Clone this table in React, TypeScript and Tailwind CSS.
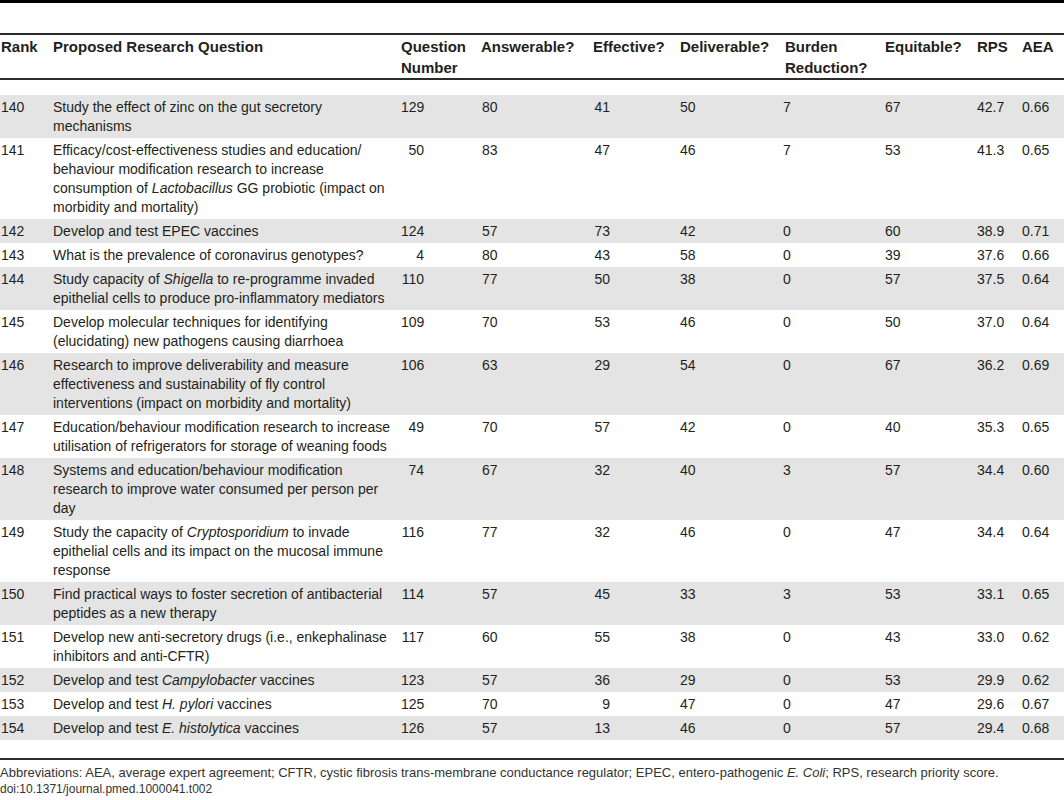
const rows: [string, string[], string, string, string, string, string, string, string, string][] = [
  ["140", ["Study the effect of zinc on the gut secretory", "mechanisms"], "129", "80", "41", "50", "7", "67", "42.7", "0.66"],
  [
    "141",
    [
      "Efficacy/cost-effectiveness studies and education/",
      "behaviour modification research to increase",
      "consumption of _Lactobacillus_ GG probiotic (impact on",
      "morbidity and mortality)",
    ],
    "50", "83", "47", "46", "7", "53", "41.3", "0.65",
  ],
  ["142", ["Develop and test EPEC vaccines"], "124", "57", "73", "42", "0", "60", "38.9", "0.71"],
  ["143", ["What is the prevalence of coronavirus genotypes?"], "4", "80", "43", "58", "0", "39", "37.6", "0.66"],
  [
    "144",
    ["Study capacity of _Shigella_ to re-programme invaded", "epithelial cells to produce pro-inflammatory mediators"],
    "110", "77", "50", "38", "0", "57", "37.5", "0.64",
  ],
  [
    "145",
    ["Develop molecular techniques for identifying", "(elucidating) new pathogens causing diarrhoea"],
    "109", "70", "53", "46", "0", "50", "37.0", "0.64",
  ],
  [
    "146",
    [
      "Research to improve deliverability and measure",
      "effectiveness and sustainability of fly control",
      "interventions (impact on morbidity and mortality)",
    ],
    "106", "63", "29", "54", "0", "67", "36.2", "0.69",
  ],
  [
    "147",
    ["Education/behaviour modification research to increase", "utilisation of refrigerators for storage of weaning foods"],
    "49", "70", "57", "42", "0", "40", "35.3", "0.65",
  ],
  [
    "148",
    ["Systems and education/behaviour modification", "research to improve water consumed per person per", "day"],
    "74", "67", "32", "40", "3", "57", "34.4", "0.60",
  ],
  [
    "149",
    ["Study the capacity of _Cryptosporidium_ to invade", "epithelial cells and its impact on the mucosal immune", "response"],
    "116", "77", "32", "46", "0", "47", "34.4", "0.64",
  ],
  [
    "150",
    ["Find practical ways to foster secretion of antibacterial", "peptides as a new therapy"],
    "114", "57", "45", "33", "3", "53", "33.1", "0.65",
  ],
  [
    "151",
    ["Develop new anti-secretory drugs (i.e., enkephalinase", "inhibitors and anti-CFTR)"],
    "117", "60", "55", "38", "0", "43", "33.0", "0.62",
  ],
  ["152", ["Develop and test _Campylobacter_ vaccines"], "123", "57", "36", "29", "0", "53", "29.9", "0.62"],
  ["153", ["Develop and test _H. pylori_ vaccines"], "125", "70", "9", "47", "0", "47", "29.6", "0.67"],
  ["154", ["Develop and test _E. histolytica_ vaccines"], "126", "57", "13", "46", "0", "57", "29.4", "0.68"],
];

const cols = "grid grid-cols-[53px_348px_80px_112px_87px_105px_100px_92px_45px_1fr]";

// "_word_" marks an italic run
function Line({ text }: { text: string }) {
  const parts = text.split("_");
  return (
    <div className="whitespace-nowrap">
      {parts.map((p, i) => (i % 2 === 1 ? <i key={i}>{p}</i> : <span key={i}>{p}</span>))}
    </div>
  );
}

export default function App() {
  return (
    <div
      className="w-[1064px] h-[800px] bg-white text-[#231f20] overflow-hidden"
      style={{ fontFamily: '"Liberation Sans", Arial, sans-serif' }}
    >
      <div className="h-[3px] bg-black" />

      <div className="mt-[30px] h-[2px] bg-[#2b2b2b]" />
      <div className={`${cols} text-[15px] font-bold leading-[21px] pt-[1px] h-[43px]`}>
        <div className="pl-[1px]">Rank</div>
        <div>Proposed Research Question</div>
        <div>
          Question
          <br />
          Number
        </div>
        <div>Answerable?</div>
        <div>Effective?</div>
        <div>Deliverable?</div>
        <div>
          Burden
          <br />
          Reduction?
        </div>
        <div>Equitable?</div>
        <div>RPS</div>
        <div>AEA</div>
      </div>
      <div className="h-[2px] bg-[#2b2b2b]" />

      <div className="mt-[15px] text-[14px] leading-[19px]">
        {rows.map((r, idx) => (
          <div
            key={r[0]}
            className={`${cols} pt-[3px] pb-[2px] ${idx % 2 === 0 ? "bg-[#e4e4e4]" : "bg-white"}`}
          >
            <div className="pl-[1px]">{r[0]}</div>
            <div>
              {r[1].map((l, i) => (
                <Line key={i} text={l} />
              ))}
            </div>
            <div>
              <div className="w-[23px] text-right">{r[2]}</div>
            </div>
            <div className="pl-[1px]">{r[3]}</div>
            <div>
              <div className="w-[17px] text-right">{r[4]}</div>
            </div>
            <div>{r[5]}</div>
            <div className="-ml-[2px]">{r[6]}</div>
            <div>{r[7]}</div>
            <div>{r[8]}</div>
            <div>{r[9]}</div>
          </div>
        ))}
      </div>

      <div className="mt-[18px] h-[2px] bg-[#2b2b2b]" />
      <div className="pt-[4px] leading-[17px] text-[#333]">
        <div className="whitespace-nowrap text-[13px]">
          Abbreviations: AEA, average expert agreement; CFTR, cystic fibrosis trans-membrane conductance regulator;
          EPEC, entero-pathogenic <i>E. Coli</i>; RPS, research priority score.
        </div>
        <div className="text-[12px]">doi:10.1371/journal.pmed.1000041.t002</div>
      </div>
    </div>
  );
}
